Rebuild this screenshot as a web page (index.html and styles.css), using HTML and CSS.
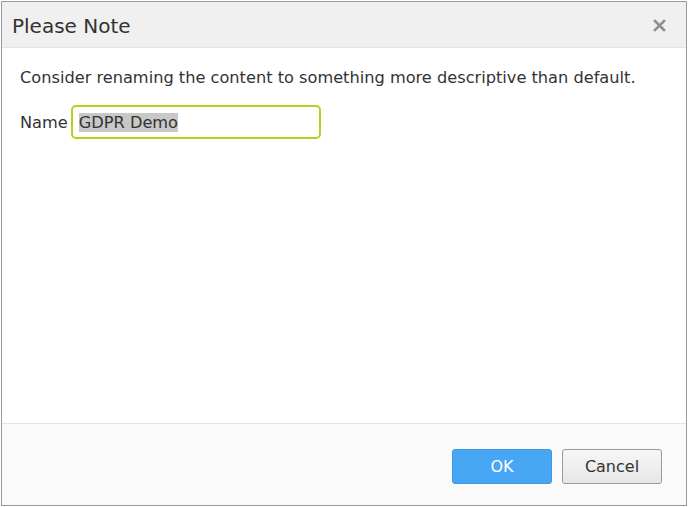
FILE: index.html
```html
<!DOCTYPE html>
<html lang="en">
<head>
    <meta charset="UTF-8">
    <title>Please Note</title>
    <link rel="stylesheet" href="styles.css">
</head>
<body>
    <div class="dialog">
        <div class="dialog-header">
            <h1 class="dialog-title">Please Note</h1>
            <svg class="dialog-close" width="13" height="13" viewBox="0 0 13 13">
                <path d="M2 2 L11 11 M11 2 L2 11" stroke="#8f8f8f" stroke-width="2.6" stroke-linecap="square"/>
            </svg>
        </div>
        <div class="dialog-body">
            <p class="note">Consider renaming the content to something more descriptive than default.</p>
            <div class="field">
                <label class="field-label">Name</label>
                <div class="field-input"><span class="selected">GDPR Demo</span></div>
            </div>
        </div>
        <div class="dialog-footer">
            <button class="button button-primary">OK</button>
            <button class="button">Cancel</button>
        </div>
    </div>
</body>
</html>
```

FILE: styles.css
```css
html, body {
    height: 100%;
}
body {
    margin: 0;
    padding: 1px;
    box-sizing: border-box;
    background: #fff;
    font-family: "DejaVu Sans", Verdana, sans-serif;
    color: #333;
}
.dialog {
    height: 100%;
    box-sizing: border-box;
    border: 1px solid #9a9a9a;
    display: flex;
    flex-direction: column;
    background: #fff;
}
.dialog-header {
    height: 46px;
    box-sizing: border-box;
    background: #f0f0f0;
    border-bottom: 1px solid #e3e3e3;
    display: flex;
    align-items: center;
    justify-content: space-between;
    padding: 2px 20px 0 10px;
}
.dialog-title {
    margin: 0;
    font-size: 20px;
    font-weight: normal;
    color: #333;
}
.dialog-close {
    display: block;
}
.dialog-body {
    flex: 1;
    padding: 20px 18px;
}
.note {
    margin: 0 0 18px 0;
    font-size: 16.2px;
    color: #333;
}
.field {
    display: flex;
    align-items: center;
    gap: 3px;
}
.field-label {
    font-size: 16.2px;
}
.field-input {
    width: 234px;
    height: 30px;
    border: 2px solid #b7cf1e;
    border-radius: 5px;
    display: flex;
    align-items: center;
    padding: 0 6px;
    font-size: 16.2px;
}
.selected {
    background: #c8c8c8;
    color: #333;
}
.dialog-footer {
    height: 82px;
    box-sizing: border-box;
    background: #fafafa;
    border-top: 1px solid #e3e3e3;
    display: flex;
    justify-content: flex-end;
    align-items: center;
    gap: 10px;
    padding: 4px 24px 0 0;
}
.button {
    width: 100px;
    height: 35px;
    font-family: inherit;
    font-size: 16px;
    color: #333;
    border: 1px solid #9a9a9a;
    border-radius: 3px;
    background: linear-gradient(#f7f7f7, #e6e6e6);
}
.button-primary {
    color: #fff;
    border: 1px solid #3d9ae6;
    background: #47a7f5;
}
```
